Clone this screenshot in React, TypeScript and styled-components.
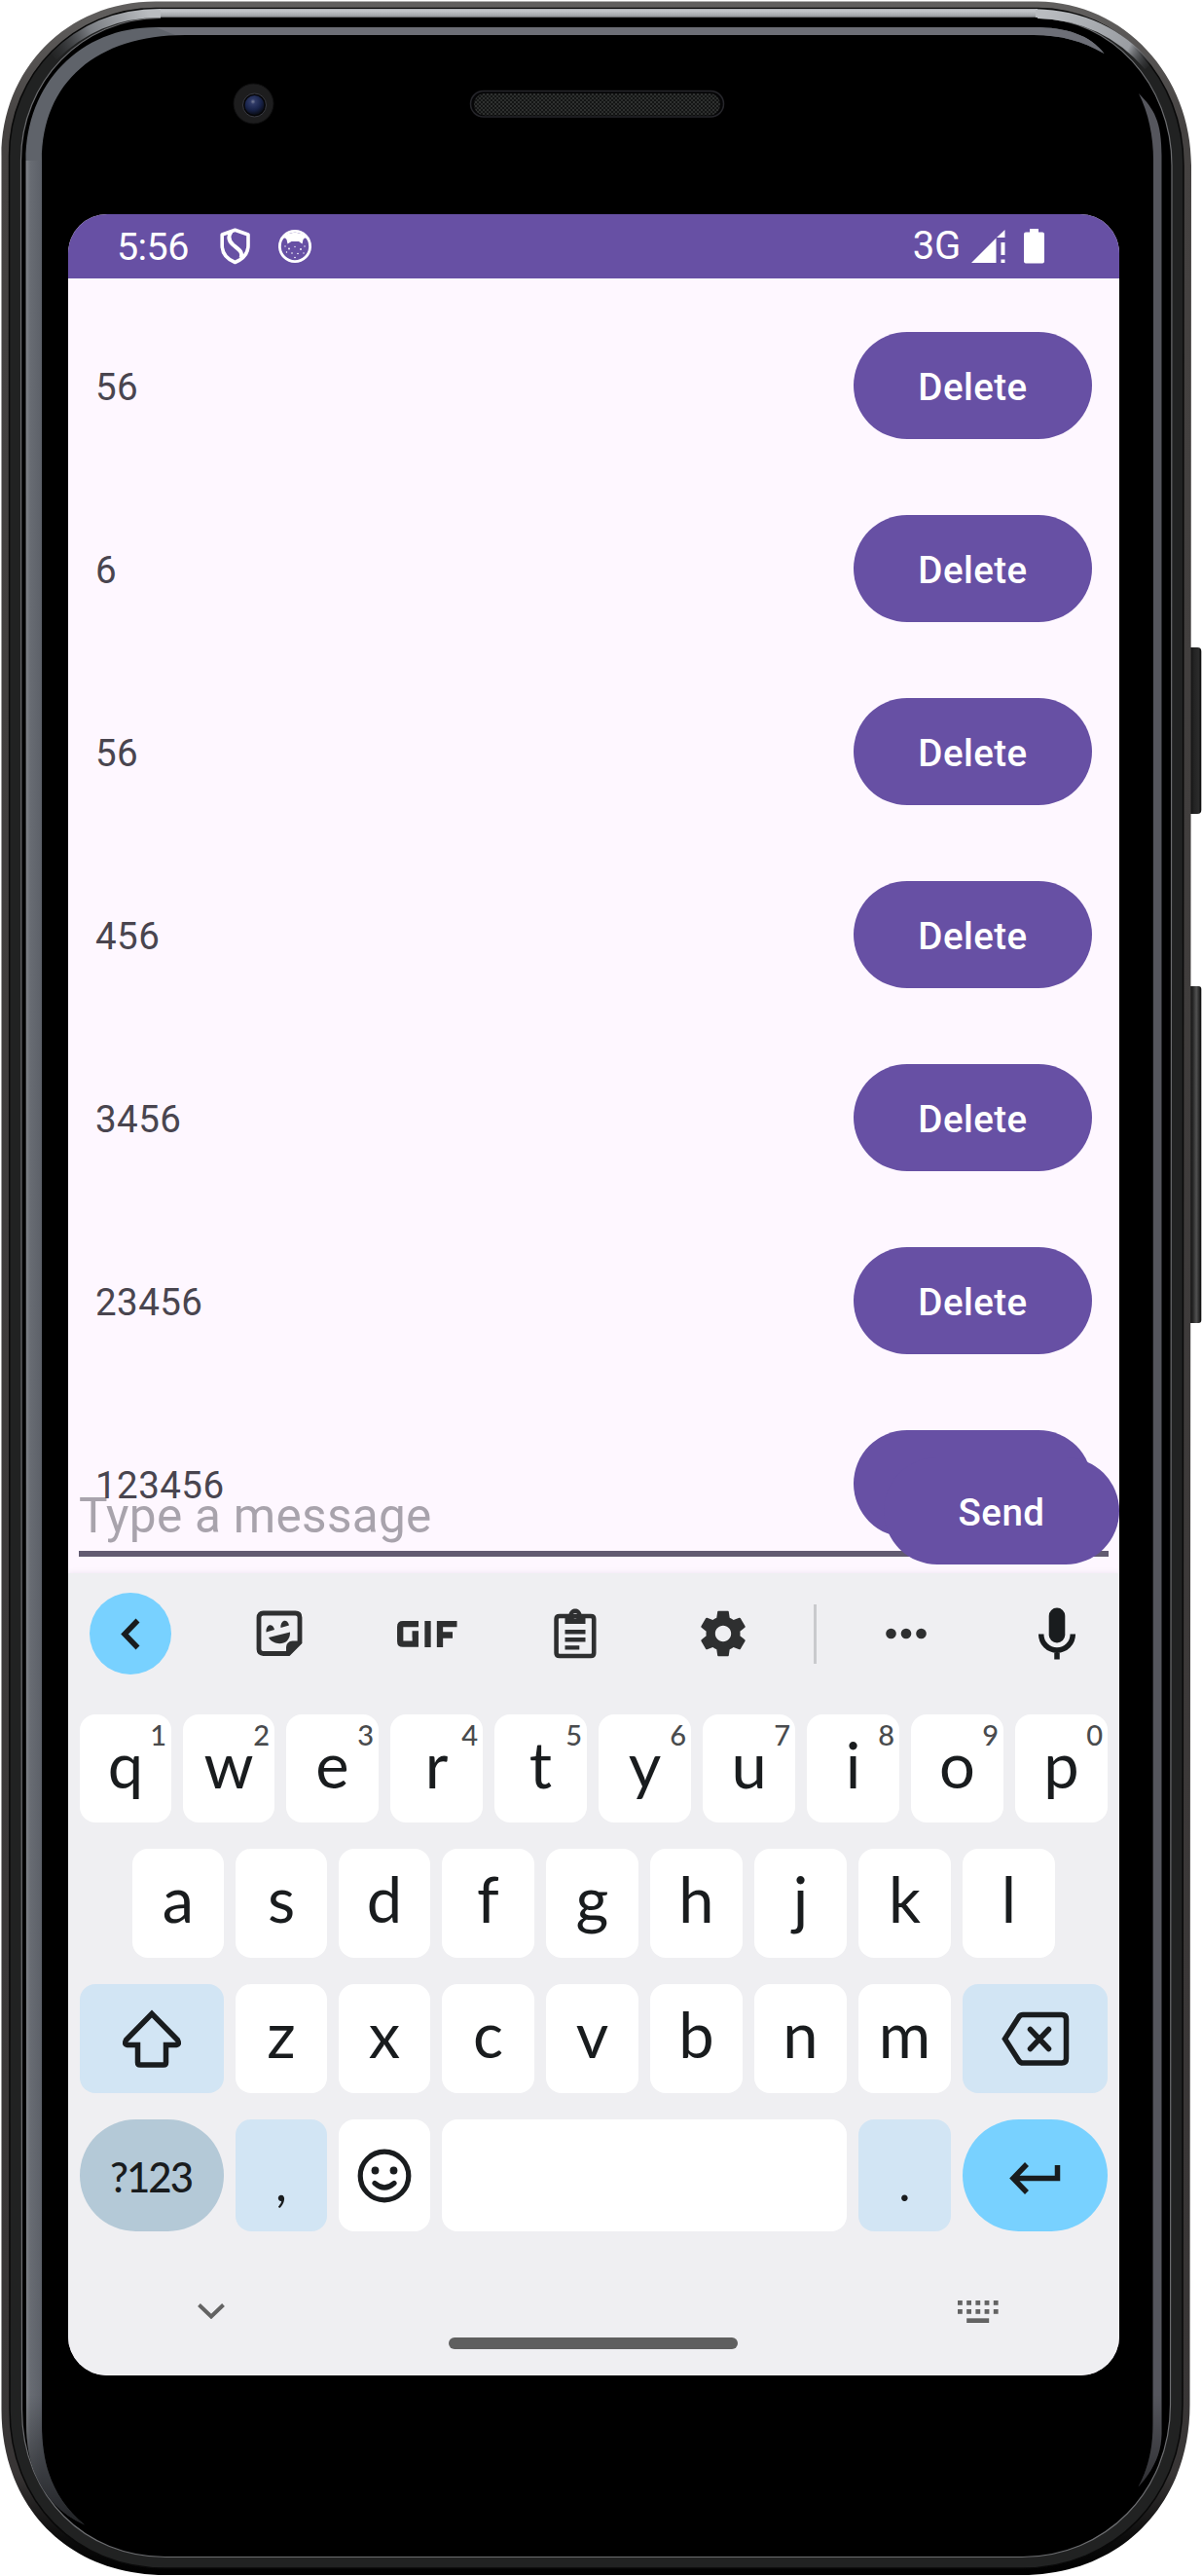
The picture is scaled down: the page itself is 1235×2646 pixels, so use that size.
import React from "react";
import styled, { createGlobalStyle } from "styled-components";

const GlobalStyle = createGlobalStyle`
  *, *::before, *::after { box-sizing: border-box; }
  body { margin: 0; background: #fff; }
  button, input { font: inherit; border: 0; margin: 0; padding: 0; }
`;

const Stage = styled.div`
  position: relative;
  width: 1235px;
  height: 2646px;
  padding: 220px 85px 206px 70px;
  overflow: hidden;
  font-family: Roboto, "Liberation Sans", sans-serif;
`;

const Frame = styled.svg`
  position: absolute;
  inset: 0;
  display: block;
`;

const Screen = styled.main`
  position: relative;
  display: flex;
  flex-direction: column;
  width: 1080px;
  height: 2220px;
  border-radius: 40px;
  overflow: hidden;
  background: #fef7ff;
`;

const StatusBar = styled.header`
  display: flex;
  align-items: center;
  height: 66px;
  flex: none;
  padding: 0 77px 0 50px;
  background: #6750a4;
  color: #fff;
`;

const Clock = styled.span`
  width: 106px;
  font-size: 39.5px;
  line-height: 66px;
  letter-spacing: -0.6px;
  padding-top: 2px;
`;

const StatusIcons = styled.div`
  display: flex;
  align-items: center;
  gap: 28px;
`;

const Network = styled.div`
  display: flex;
  align-items: center;
  margin-left: auto;
`;

const NetworkType = styled.span`
  font-size: 40px;
  line-height: 66px;
  margin-right: 11px;
  letter-spacing: -0.2px;
`;

const Battery = styled.svg`
  margin-left: 19px;
`;

const Chat = styled.section`
  position: relative;
  flex: none;
  height: 1330px;
  padding-top: 16px;
`;

const MessageRow = styled.div`
  display: flex;
  align-items: center;
  justify-content: space-between;
  height: 188px;
  padding: 0 28px;
`;

const MessageText = styled.span`
  font-size: 38.5px;
  line-height: 52px;
  letter-spacing: 0.45px;
  color: #49454f;
  padding-top: 4px;
`;

const PillButton = styled.button<{ $width: number }>`
  width: ${(p) => p.$width}px;
  height: 110px;
  border-radius: 55px;
  background: #6750a4;
  color: #fff;
  font-size: 38.5px;
  font-weight: 500;
  letter-spacing: 0.45px;
  padding-top: 2px;
`;

/* The composer floats over the tail of the list; its button sits on the field. */
const Composer = styled.div`
  position: absolute;
  left: 0;
  right: 0;
  bottom: 9px;
  display: grid;
  height: 110px;
  > * { grid-area: 1 / 1; }
  > button { justify-self: end; }
`;

const Field = styled.div`
  align-self: end;
  margin: 0 11px 8px;
  padding-bottom: 7px;
  border-bottom: 6px solid #625b71;
  font-size: 49.5px;
  line-height: 58px;
  letter-spacing: 0.3px;
  color: rgba(73, 69, 79, 0.47);
`;

const Keyboard = styled.section`
  flex: 1;
  background: #efeff2;
  box-shadow: 0 0 6px rgba(80, 60, 110, 0.1);
  position: relative;
  font-family: Lato, "Noto Sans", sans-serif;
  color: #191c1e;
`;

const Toolbar = styled.div`
  display: flex;
  align-items: center;
  height: 124px;
  padding: 0 36px 0 22px;
  color: #2e2f30;
`;

const BackButton = styled.div`
  display: grid;
  place-items: center;
  width: 84px;
  height: 84px;
  margin-right: 35px;
  border-radius: 50%;
  background: #78d1ff;
`;

const Tool = styled.div`
  display: grid;
  place-items: center;
  width: 152px;
`;

const Divider = styled.div`
  width: 3px;
  height: 61px;
  margin: 0 16px 0 17px;
  background: #c9cacd;
`;

const MicIcon = styled.svg`
  margin-left: auto;
`;

const Keys = styled.div`
  display: flex;
  flex-direction: column;
  gap: 27px;
  padding: 21px 12px 0;
`;

const KeyRow = styled.div<{ $height: number }>`
  display: flex;
  justify-content: center;
  gap: 12px;
  height: ${(p) => p.$height}px;
`;

const tones = { plain: "#ffffff", soft: "#d2e5f4", muted: "#b4c9d7", accent: "#78d1ff" };

const Key = styled.div<{ $tone?: keyof typeof tones; $width?: number; $round?: boolean }>`
  position: relative;
  display: flex;
  align-items: center;
  justify-content: center;
  flex: ${(p) => (p.$width ? `0 0 ${p.$width}px` : "1 1 0")};
  height: 100%;
  border-radius: ${(p) => (p.$round ? 57.5 : 16)}px;
  background: ${(p) => tones[p.$tone ?? "plain"]};
`;

const Letter = styled.span`
  font-size: 65px;
  line-height: 78px;
  padding-bottom: 10px;
`;

const Punctuation = styled.span`
  font-size: 52px;
  line-height: 62px;
  padding-top: 13px;
`;

const SymbolsLabel = styled.span`
  font-size: 42px;
  font-weight: 500;
  letter-spacing: -2px;
  padding: 2px 2px 0 0;
`;

const Digit = styled.span`
  position: absolute;
  top: 3px;
  right: 5px;
  font-size: 29px;
  font-weight: 500;
  line-height: 35px;
  color: #494b4d;
`;

const NavBar = styled.div`
  display: flex;
  align-items: flex-start;
  justify-content: space-between;
  padding: 71px 124px 0 133px;
`;

const HideIcon = styled.svg`
  margin-top: 3px;
`;

const HomeHandle = styled.div`
  width: 297px;
  height: 12px;
  margin: 38px 0 0 4px;
  border-radius: 6px;
  background: #5f5f5f;
`;

const messages = ["56", "6", "56", "456", "3456", "23456", "123456"];

const RIGHT_GLINT =
  "M1170 96C1186 112 1193.5 125 1193.5 160V2500C1193 2520 1186 2536 1169.5 2554.5C1180 2535 1184.5 2515 1184.5 2490L1185 165C1185 140 1180 116 1170 96Z";
const LEFT_GLINT =
  "M26.5 165H43V2490C43 2535 56 2568 87 2593.5C48 2576 27 2540 27 2490Z";

function PhoneFrame() {
  return (
    <Frame width="1235" height="2646" viewBox="0 0 1235 2646" fill="none">
      <defs>
        <linearGradient id="rim" x1="0" y1="0" x2="0" y2="2646" gradientUnits="userSpaceOnUse">
          <stop offset="0" stopColor="#62605f" />
          <stop offset="0.05" stopColor="#454241" />
          <stop offset="0.96" stopColor="#383535" />
          <stop offset="0.985" stopColor="#0c0c0c" />
          <stop offset="1" stopColor="#000" />
        </linearGradient>
        <linearGradient id="shine" x1="0" y1="8" x2="0" y2="19" gradientUnits="userSpaceOnUse">
          <stop offset="0" stopColor="#8b8d91" />
          <stop offset="0.25" stopColor="#c5c8cc" />
          <stop offset="0.75" stopColor="#a3a6aa" />
          <stop offset="1" stopColor="#2a2a2c" />
        </linearGradient>
        <linearGradient id="leftShine" x1="50" y1="58" x2="150" y2="8" gradientUnits="userSpaceOnUse">
          <stop offset="0" stopColor="#3a3c40" stopOpacity="0" />
          <stop offset="0.45" stopColor="#7b7e83" />
          <stop offset="1" stopColor="#b9bcc0" />
        </linearGradient>
        <linearGradient id="rightShine" x1="1075" y1="10" x2="1182" y2="72" gradientUnits="userSpaceOnUse">
          <stop offset="0" stopColor="#b9bcc0" />
          <stop offset="0.75" stopColor="#9a9da2" />
          <stop offset="1" stopColor="#3a3c40" stopOpacity="0" />
        </linearGradient>
        <linearGradient id="leftBand" x1="26" y1="0" x2="43" y2="0" gradientUnits="userSpaceOnUse">
          <stop offset="0" stopColor="#85888d" />
          <stop offset="0.3" stopColor="#686c73" />
          <stop offset="1" stopColor="#5c6068" />
        </linearGradient>
        <linearGradient id="fade" x1="0" y1="2460" x2="0" y2="2595" gradientUnits="userSpaceOnUse">
          <stop offset="0" stopColor="#000" stopOpacity="0" />
          <stop offset="1" stopColor="#000" stopOpacity="0.65" />
        </linearGradient>
        <linearGradient id="sideKey" x1="1222" y1="0" x2="1234" y2="0" gradientUnits="userSpaceOnUse">
          <stop offset="0" stopColor="#0d0d0d" />
          <stop offset="0.3" stopColor="#262626" />
          <stop offset="0.6" stopColor="#525252" />
          <stop offset="0.85" stopColor="#282828" />
          <stop offset="1" stopColor="#0a0a0a" />
        </linearGradient>
        <linearGradient id="sideKeyTop" x1="1222" y1="0" x2="1234" y2="0" gradientUnits="userSpaceOnUse">
          <stop offset="0" stopColor="#0d0d0d" />
          <stop offset="0.4" stopColor="#232323" />
          <stop offset="0.8" stopColor="#2b2b2b" />
          <stop offset="1" stopColor="#0a0a0a" />
        </linearGradient>
        <radialGradient id="lens" cx="0.42" cy="0.32" r="0.65">
          <stop offset="0" stopColor="#7a8099" />
          <stop offset="0.2" stopColor="#2f3a66" />
          <stop offset="0.65" stopColor="#18234a" />
          <stop offset="1" stopColor="#0b0f1c" />
        </radialGradient>
        <pattern id="mesh" width="4" height="4" patternUnits="userSpaceOnUse">
          <rect width="4" height="4" fill="#141515" />
          <circle cx="1" cy="1" r="0.8" fill="#515352" />
          <circle cx="3" cy="3" r="0.8" fill="#484a49" />
        </pattern>
      </defs>

      <rect x="1219" y="665" width="15.3" height="171" rx="4" fill="url(#sideKeyTop)" />
      <rect x="1219" y="1013" width="15.3" height="346" rx="3" fill="url(#sideKey)" />

      <path d="M1.5 160C1.5 72 68 1.5 160 1.5H1066C1156 2.500 1224 78 1224 170L1222.500 2470C1222.500 2572 1152 2645 1050 2645H170C70 2645 1.500 2575 1.500 2475Z" fill="url(#rim)" />
      <path d="M9.500 160C9.500 76 76 8.500 160 8.500H1066C1150 9 1216 80 1216 170L1215 2470C1215 2565 1145 2638 1050 2638H170C78 2638 10 2570 10 2475Z" fill="#212222" stroke="#090909" strokeWidth="1.500" />
      <path d="M21.500 165C21.500 84 84 18.500 165 18.500H1066C1142 19 1204 86 1204 170L1202.500 2470C1202.500 2560 1135 2626.500 1050 2626.500H170C88 2626.500 22.500 2565 22.500 2475Z" fill="#000" stroke="#6c6d70" strokeWidth="1.200" />
      <path d="M165 9H1066V19H165Z" fill="url(#shine)" />
      <path d="M165 13.500C118 13.500 84 30 55 58" stroke="url(#leftShine)" strokeWidth="9" />
      <path d="M1064 14C1112 15 1150 33 1180 68" stroke="url(#rightShine)" strokeWidth="9.500" />
      <path d="M165 19.500H1066" stroke="#000" strokeWidth="3" />

      <path d="M26.500 165C26.500 86 82 28 160 28H1062C1096 28 1120 36 1134.500 55C1112 42 1090 36 1062 36H190C100 36 43 84 43 165Z" fill="#5f636a" />
      <path d={LEFT_GLINT} fill="url(#leftBand)" />
      <path d="M160 28H1062C1096 28 1120 36 1134.500 55C1112 42 1090 36 1062 36H180Z" fill="#6d6f77" />
      <path d={RIGHT_GLINT} fill="#55565d" />
      <path d={LEFT_GLINT} fill="url(#fade)" />
      <path d={RIGHT_GLINT} fill="url(#fade)" />

      <circle cx="260.500" cy="106.500" r="20.500" fill="#1d1d1e" stroke="#101011" />
      <circle cx="261.500" cy="108" r="12" fill="#060608" stroke="#3a3b42" />
      <circle cx="261.500" cy="108" r="10" fill="url(#lens)" />

      <rect x="483.500" y="93.500" width="260" height="26.500" rx="13.250" fill="#060607" stroke="#26262b" strokeWidth="1.500" />
      <rect x="487" y="96" width="253" height="22.500" rx="11.250" fill="url(#mesh)" />
    </Frame>
  );
}

function LetterKey({ char, width, digit }: { char: string; width: number; digit?: string }) {
  return (
    <Key $width={width}>
      <Letter>{char}</Letter>
      {digit && <Digit>{digit}</Digit>}
    </Key>
  );
}

export default function App() {
  return (
    <>
      <GlobalStyle />
      <Stage>
        <PhoneFrame />
        <Screen>
          <StatusBar>
            <Clock>5:56</Clock>
            <StatusIcons>
              <svg width="31" height="38" viewBox="0 0 31 38" fill="none" stroke="#fff" strokeWidth="3.600" strokeLinejoin="round">
                <path d="M15.500 2.200L29 7V18C29 26.500 23 32.500 15.500 35.500C8 32.500 2.200 26.500 2.200 18V7Z" />
                <path d="M11.500 4C8 9 9 13.500 13.500 17.500C19 22 24 24.500 21.500 31" strokeWidth="4" />
              </svg>
              <svg width="36" height="36" viewBox="0 0 36 36">
                <circle cx="18" cy="18" r="15.600" fill="none" stroke="#fff" strokeWidth="2.800" />
                <path d="M5 10C9 2 27 2 31 10L28 9.500L26.500 11L25.500 15.500L22 13H14.500L10.500 15.500L9.500 11L8 9.500Z" fill="#fff" />
                <g fill="#fff">
                  <circle cx="12" cy="20.500" r="0.900" /><circle cx="18" cy="18.500" r="0.700" /><circle cx="24" cy="21" r="0.900" />
                  <circle cx="8" cy="18" r="0.700" /><circle cx="28" cy="18" r="0.700" /><circle cx="15" cy="25" r="0.800" />
                  <circle cx="21" cy="25.500" r="0.800" /><circle cx="9.500" cy="24" r="0.700" /><circle cx="27" cy="25" r="0.700" />
                  <circle cx="18" cy="29.500" r="0.800" />
                </g>
              </svg>
            </StatusIcons>
            <Network>
              <NetworkType>3G</NetworkType>
              <svg width="35" height="34" viewBox="0 0 35 34" fill="#fff">
                <path d="M0 34L25.500 8.500V34Z" />
                <path d="M26 8L34.500 0V8Z" />
                <path d="M30.500 13H34.500V26H30.500Z M30.500 30.500H34.500V34H30.500Z" />
              </svg>
              <Battery width="21" height="36" viewBox="0 0 21 36" fill="#fff">
                <path d="M6 0H15V3.500H19Q21 3.500 21 5.500V33.500Q21 35.500 19 35.500H2Q0 35.500 0 33.500V5.500Q0 3.500 2 3.500H6Z" />
              </Battery>
            </Network>
          </StatusBar>

          <Chat>
            {messages.map((text, i) => (
              <MessageRow key={i}>
                <MessageText>{text}</MessageText>
                <PillButton $width={245}>{i < messages.length - 1 ? "Delete" : null}</PillButton>
              </MessageRow>
            ))}
            <Composer>
              <Field>Type a message</Field>
              <PillButton $width={242}>Send</PillButton>
            </Composer>
          </Chat>

          <Keyboard>
            <Toolbar>
              <BackButton>
                <svg width="20" height="33" viewBox="0 0 20 33" fill="none" stroke="#191c1e" strokeWidth="5.500">
                  <path d="M17.500 2.500L4 16.500L17.500 30.500" />
                </svg>
              </BackButton>
              <Tool>
                <svg width="48" height="48" viewBox="0 0 48 48">
                  <path d="M7.500 3H40.500Q45 3 45 7.500V33L33.500 44.500H7.500Q3 44.500 3 40V7.500Q3 3 7.500 3Z" fill="none" stroke="#2e2f30" strokeWidth="4.800" />
                  <path d="M47 32.500L34 46.500L31 44V38Q31.500 32 37.500 31.500H47Z" fill="currentColor" />
                  <path d="M10.500 22.500A4.300 6 0 0 1 19 20Z M25.500 18A4.300 6 0 0 1 34 15.500Z" fill="currentColor" />
                  <path d="M13 28L35 22.500C35.500 37 18 37 13 28Z" fill="currentColor" />
                </svg>
              </Tool>
              <Tool>
                <svg width="62" height="27" viewBox="0 0 62 27" fill="none" stroke="#2e2f30" strokeWidth="6.300">
                  <path d="M22 3.200H6Q3.200 3.200 3.200 6V21Q3.200 23.700 6 23.700H18.800V13.500H15.500" />
                  <path d="M31.500 0V27 M44 27V3.200H61.500 M44 14.500H57" />
                </svg>
              </Tool>
              <Tool>
                <svg width="44" height="52" viewBox="0 0 44 52">
                  <path d="M6 8H38Q41.200 8 41.200 11V46Q41.200 49 38 49H6Q2.600 49 2.600 46V11Q2.600 8 6 8Z" fill="none" stroke="#2e2f30" strokeWidth="4.600" />
                  <path fillRule="evenodd" d="M11.500 6H15.500C17 -1.500 27 -1.500 28.500 6H32.500V16H11.500Z M22 5A2.700 2.700 0 1 0 22 10.400A2.700 2.700 0 1 0 22 5Z" fill="currentColor" />
                  <path d="M11.500 24.200H32.500 M11.500 32.200H32.500 M11.500 40.400H26.300" stroke="#2e2f30" strokeWidth="4.400" />
                </svg>
              </Tool>
              <Tool>
                <svg width="56" height="56" viewBox="0 0 24 24" fill="currentColor">
                  <path d="M19.430 12.980c.04-.32.07-.64.07-.98s-.03-.66-.07-.98l2.110-1.650c.19-.15.24-.42.12-.64l-2-3.460c-.12-.22-.39-.3-.61-.22l-2.490 1c-.52-.4-1.080-.73-1.690-.98l-.38-2.650C14.460 2.180 14.250 2 14 2h-4c-.25 0-.46.18-.49.42l-.38 2.650c-.61.25-1.170.59-1.690.98l-2.490-1c-.23-.09-.49 0-.61.22l-2 3.460c-.13.22-.07.49.12.64l2.110 1.650c-.04.32-.07.65-.07.98s.03.66.07.98l-2.110 1.650c-.19.15-.24.42-.12.64l2 3.460c.12.22.39.3.61.22l2.490-1c.52.4 1.080.73 1.690.98l.38 2.650c.03.24.24.42.49.42h4c.25 0 .46-.18.49-.42l.38-2.650c.61-.25 1.170-.59 1.690-.98l2.490 1c.23.09.49 0 .61-.22l2-3.460c.12-.22.07-.49-.12-.64l-2.110-1.650zM12 15.500c-1.930 0-3.500-1.570-3.500-3.500s1.570-3.500 3.500-3.500 3.500 1.570 3.500 3.500-1.570 3.500-3.500 3.500z" />
                </svg>
              </Tool>
              <Divider />
              <Tool>
                <svg width="42" height="12" viewBox="0 0 42 12" fill="currentColor">
                  <circle cx="5.500" cy="6" r="5.300" /><circle cx="21" cy="6" r="5.300" /><circle cx="36.500" cy="6" r="5.300" />
                </svg>
              </Tool>
              <MicIcon width="56" height="56" viewBox="0 0 56 56">
                <rect x="19.700" y="1.500" width="16.600" height="36" rx="8.300" fill="#191c1e" />
                <path d="M11.700 28.500C11.700 38 19 45 28 45S44.300 38 44.300 28.500 M28 45V54.500" fill="none" stroke="#191c1e" strokeWidth="5.500" />
              </MicIcon>
            </Toolbar>

            <Keys>
              <KeyRow $height={111}>
                {[..."qwertyuiop"].map((c, i) => (
                  <LetterKey key={c} char={c} width={i < 2 ? 94 : 95} digit={String((i + 1) % 10)} />
                ))}
              </KeyRow>
              <KeyRow $height={112}>
                {[..."asdfghjkl"].map((c, i) => <LetterKey key={c} char={c} width={i < 3 ? 94 : 95} />)}
              </KeyRow>
              <KeyRow $height={112}>
                <Key $tone="soft" $width={148}>
                  <svg width="62" height="60" viewBox="0 0 62 60" fill="none" stroke="#191c1e" strokeWidth="5.500">
                    <path d="M31 4.500L57.500 31.500Q60 36 56 36.500H45.500V54.500Q45.500 57 43 57H19Q16.500 57 16.500 54.500V36.500H6Q2 36 4.500 31.500Z" />
                  </svg>
                </Key>
                {[..."zxcvbnm"].map((c, i) => <LetterKey key={c} char={c} width={i < 2 ? 94 : 95} />)}
                <Key $tone="soft" $width={149}>
                  <svg width="70" height="56" viewBox="0 0 70 56" fill="none" stroke="#191c1e" strokeWidth="5.500">
                    <path d="M22 3.500H62Q66.500 3.500 66.500 8V48.500Q66.500 53 62 53H22Q19.500 53 18 51L3.500 28.200L18 5.500Q19.500 3.500 22 3.500Z" />
                    <path d="M29.500 18.500L48.500 38.500 M48.500 18.500L29.500 38.500" strokeLinecap="round" />
                  </svg>
                </Key>
              </KeyRow>
              <KeyRow $height={115}>
                <Key $tone="muted" $width={148} $round><SymbolsLabel>?123</SymbolsLabel></Key>
                <Key $tone="soft" $width={94}><Punctuation>,</Punctuation></Key>
                <Key $width={94}>
                  <svg width="56" height="56" viewBox="0 0 56 56" fill="none" stroke="#191c1e" strokeWidth="5.200">
                    <circle cx="28" cy="28" r="24.800" />
                    <path d="M18 35.500Q28 44.500 38 35.500" strokeLinecap="round" />
                    <circle cx="18.500" cy="22.500" r="3.900" fill="#191c1e" stroke="none" />
                    <circle cx="37.500" cy="22.500" r="3.900" fill="#191c1e" stroke="none" />
                  </svg>
                </Key>
                <Key />
                <Key $tone="soft" $width={95}><Punctuation>.</Punctuation></Key>
                <Key $tone="accent" $width={149} $round>
                  <svg width="53" height="40" viewBox="0 0 53 40" fill="none" stroke="#191c1e" strokeWidth="5.500">
                    <path d="M18 8L4 22.500L18 37 M4 22.500H49.500V9" />
                  </svg>
                </Key>
              </KeyRow>
            </Keys>

            <NavBar>
              <HideIcon width="28" height="16" viewBox="0 0 28 16" fill="none" stroke="#636363" strokeWidth="4">
                <path d="M1.500 1.500L14 13.500L26.500 1.500" />
              </HideIcon>
              <HomeHandle />
              <svg width="42" height="24" viewBox="0 0 42 24" fill="#636363">
                {[0, 1, 2, 3, 4].map((i) => (
                  <React.Fragment key={i}>
                    <rect x={i * 9.200} y="0" width="4.800" height="4.800" />
                    <rect x={i * 9.200} y="9" width="4.800" height="4.800" />
                  </React.Fragment>
                ))}
                <rect x="9.200" y="18.300" width="23" height="4.700" />
              </svg>
            </NavBar>
          </Keyboard>
        </Screen>
      </Stage>
    </>
  );
}
